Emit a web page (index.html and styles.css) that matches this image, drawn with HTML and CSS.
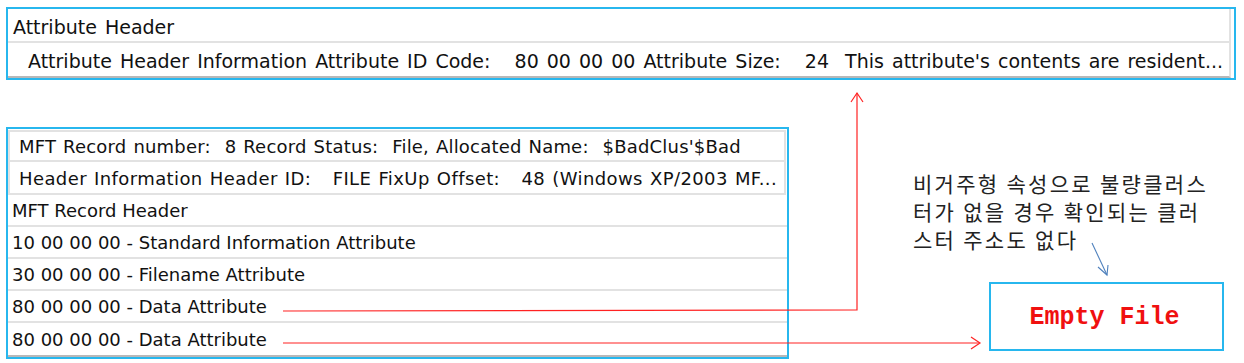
FILE: index.html
```html
<!DOCTYPE html>
<html lang="en">
<head>
    <meta charset="UTF-8">
    <title>$BadClus MFT Record</title>
    <link rel="stylesheet" href="styles.css">
</head>
<body>
    <div class="panel attr">
        <div class="row head">Attribute Header</div>
        <div class="row sub">Attribute Header Information Attribute ID Code:   80 00 00 00 Attribute Size:   24  This attribute's contents are resident...</div>
    </div>

    <div class="lower">
        <div class="panel record">
            <div class="row boxed">MFT Record number:  8 Record Status:  File, Allocated Name:  $BadClus'$Bad</div>
            <div class="row boxed second">Header Information Header ID:   FILE FixUp Offset:   48 (Windows XP/2003 MF...</div>
            <div class="row">MFT Record Header</div>
            <div class="row">10 00 00 00 - Standard Information Attribute</div>
            <div class="row">30 00 00 00 - Filename Attribute</div>
            <div class="row">80 00 00 00 - Data Attribute</div>
            <div class="row last">80 00 00 00 - Data Attribute</div>
        </div>
        <div class="aside">
            <p class="note">비거주형 속성으로 불량클러스<br>터가 없을 경우 확인되는 클러<br>스터 주소도 없다</p>
            <div class="empty">Empty File</div>
        </div>
    </div>

    <!-- connector arrows drawn over the page -->
    <svg class="arrows" width="1244" height="363" viewBox="0 0 1244 363">
        <g fill="none" stroke="#f22" stroke-width="1.2">
            <polyline points="283,311 857,310 857,93"/>
            <polyline points="851,102 857,93 863,102"/>
            <line x1="283" y1="343" x2="979" y2="343"/>
            <polyline points="971,337 980,343 971,349"/>
        </g>
        <g fill="none" stroke="#4f81bd" stroke-width="1.1">
            <line x1="1092" y1="243" x2="1107" y2="275"/>
            <polyline points="1098,267 1107,275 1108,265"/>
        </g>
    </svg>
</body>
</html>
```

FILE: styles.css
```css
body { margin: 0; position: relative; width: 1244px; height: 363px; background: #fff; font-family: "DejaVu Sans", sans-serif; font-size: 18px; color: #111; overflow: hidden; }

.panel { border: 2px solid #27b7ee; background: #fff; box-sizing: border-box; }
.row { white-space: pre; box-sizing: border-box; border-bottom: 2px solid #e2e2e2; display: flex; align-items: center; overflow: hidden; }

.attr { margin: 7px 0 0 6px; width: 1230px; padding-right: 3px; font-size: 19px; word-spacing: 2px; }
.attr .row { border-right: 2px solid #e2e2e2; padding-top: 3px; }
.attr .head { height: 34px; padding-left: 5px; }
.attr .sub { height: 35px; padding-left: 20px; border-bottom: 2px solid #b8b8b8; }

.lower { display: flex; margin-top: 47px; }
.record { width: 783px; margin-left: 6px; }
.record .row { height: 32px; padding-left: 4px; padding-top: 1px; }
.record .boxed { border: 2px solid #e2e2e2; border-top: none; padding-left: 9px; margin-right: 1px; word-spacing: 1px; letter-spacing: 0.2px; }
.record .boxed:first-child { border-top: 2px solid #e2e2e2; margin-top: 1px; height: 32px; }
.record .second { height: 33px; letter-spacing: 0.4px; }
.record .last { height: 34px; border-bottom: 2px solid #b8b8b8; }

.aside { margin-left: 124px; }
.note { margin: 42px 0 0 0; font-family: "Noto Sans CJK KR", sans-serif; font-size: 21px; line-height: 28px; color: #222; letter-spacing: 2.3px; }
.empty { margin: 29px 0 0 76px; width: 235px; height: 69px; box-sizing: border-box; border: 2px solid #27b7ee; display: flex; align-items: center; justify-content: center; font-family: "Liberation Mono", monospace; font-weight: bold; font-size: 25px; color: #f01010; padding: 2px 4px 0 0; }

.arrows { position: absolute; left: 0; top: 0; pointer-events: none; }
```
